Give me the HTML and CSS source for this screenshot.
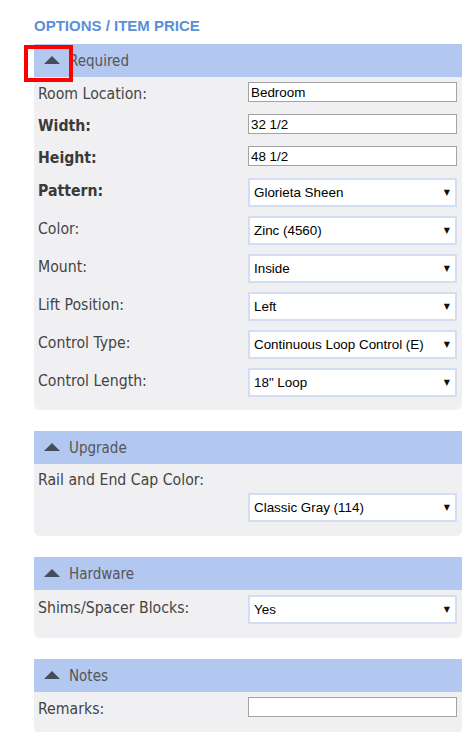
FILE: index.html
```html
<!DOCTYPE html>
<html>
<head>
<meta charset="utf-8">
<link rel="stylesheet" href="styles.css">
</head>
<body>
<div class="page">
  <h1 class="title">OPTIONS / ITEM PRICE</h1>

  <section class="panel">
    <div class="panel-head"><span class="tri"></span><span class="head-text">Required</span><span class="marker"></span></div>
    <div class="panel-body">
      <div class="row row-text"><label class="lbl">Room Location:</label><input class="txt" type="text" value="Bedroom"></div>
      <div class="row row-text"><label class="lbl bold">Width:</label><input class="txt" type="text" value="32 1/2"></div>
      <div class="row row-text"><label class="lbl bold">Height:</label><input class="txt" type="text" value="48 1/2"></div>
      <div class="row row-sel"><label class="lbl bold">Pattern:</label><div class="sel"><span>Glorieta Sheen</span><span class="arr">▼</span></div></div>
      <div class="row row-sel"><label class="lbl">Color:</label><div class="sel"><span>Zinc (4560)</span><span class="arr">▼</span></div></div>
      <div class="row row-sel"><label class="lbl">Mount:</label><div class="sel"><span>Inside</span><span class="arr">▼</span></div></div>
      <div class="row row-sel"><label class="lbl">Lift Position:</label><div class="sel"><span>Left</span><span class="arr">▼</span></div></div>
      <div class="row row-sel"><label class="lbl">Control Type:</label><div class="sel"><span>Continuous Loop Control (E)</span><span class="arr">▼</span></div></div>
      <div class="row row-sel"><label class="lbl">Control Length:</label><div class="sel"><span>18" Loop</span><span class="arr">▼</span></div></div>
    </div>
  </section>

  <section class="panel">
    <div class="panel-head"><span class="tri"></span><span class="head-text">Upgrade</span></div>
    <div class="panel-body body-upgrade">
      <label class="lbl lbl-full">Rail and End Cap Color:</label>
      <div class="row row-sel row-right"><div class="sel"><span>Classic Gray (114)</span><span class="arr">▼</span></div></div>
    </div>
  </section>

  <section class="panel">
    <div class="panel-head"><span class="tri"></span><span class="head-text">Hardware</span></div>
    <div class="panel-body body-hw">
      <div class="row row-sel"><label class="lbl">Shims/Spacer Blocks:</label><div class="sel"><span>Yes</span><span class="arr">▼</span></div></div>
    </div>
  </section>

  <section class="panel">
    <div class="panel-head"><span class="tri"></span><span class="head-text">Notes</span></div>
    <div class="panel-body body-notes">
      <div class="row row-text"><label class="lbl">Remarks:</label><input class="txt" type="text" value=""></div>
    </div>
  </section>
</div>
</body>
</html>
```

FILE: styles.css
```css
html, body {
  margin: 0;
  padding: 0;
  background: #ffffff;
}
.page {
  padding: 17px 4px 0 34px;
}
.title {
  margin: 0 0 10px 0;
  font-family: "Liberation Sans", Arial, sans-serif;
  font-weight: bold;
  font-size: 15px;
  line-height: 17px;
  color: #5b8fd9;
}
.panel {
  margin-bottom: 21px;
}
.panel-head {
  position: relative;
  height: 33px;
  background: #b3c8f1;
  display: flex;
  align-items: center;
  padding-left: 10px;
}
.tri {
  width: 0;
  height: 0;
  border-left: 8px solid transparent;
  border-right: 8px solid transparent;
  border-bottom: 8px solid #454d5b;
  margin-right: 9px;
  margin-top: -1px;
}
.head-text {
  font-family: "DejaVu Sans Condensed", "DejaVu Sans", sans-serif;
  font-size: 15px;
  color: #555555;
}
.marker {
  position: absolute;
  left: -10px;
  top: 1px;
  width: 41px;
  height: 29px;
  border: 4px solid #ff0000;
}
.panel-body {
  background: #f0f0f2;
  border-radius: 0 0 6px 6px;
  padding: 5px 5px 13px 4px;
}
.row {
  display: flex;
  align-items: flex-start;
}
.row-text + .row-text {
  margin-top: 12px;
}
.row-text + .row-sel {
  margin-top: 12px;
}
.row-sel + .row-sel {
  margin-top: 9px;
}
.lbl {
  width: 210px;
  flex: none;
  font-family: "DejaVu Sans Condensed", "DejaVu Sans", sans-serif;
  font-size: 15.7px;
  line-height: 16px;
  color: #444444;
}
.row-text .lbl {
  padding-top: 4px;
}
.row-sel .lbl {
  padding-top: 5px;
}
.bold {
  font-weight: bold;
  color: #3a3a3a;
}
.txt {
  box-sizing: border-box;
  width: 209px;
  height: 20px;
  margin: 0;
  border: 1px solid #a3a3a3;
  background: #ffffff;
  padding: 0 2px;
  font-family: "Liberation Sans", Arial, sans-serif;
  font-size: 13.4px;
  color: #000000;
  outline: none;
}
.sel {
  box-sizing: border-box;
  width: 209px;
  height: 29px;
  border: 2px solid #d3ddf3;
  background: #ffffff;
  display: flex;
  align-items: center;
  justify-content: space-between;
  padding: 0 5px 0 4px;
  font-family: "Liberation Sans", Arial, sans-serif;
  font-size: 13.4px;
  color: #000000;
}
.arr {
  font-family: "DejaVu Sans", sans-serif;
  font-size: 8px;
  color: #111111;
}
.body-upgrade {
  padding-top: 7px;
  padding-bottom: 14px;
}
.lbl-full {
  display: block;
  width: auto;
  line-height: 18px;
}
.row-right {
  justify-content: flex-end;
  margin-top: 4px;
}
.body-hw {
  padding-top: 5px;
  padding-bottom: 14px;
}
.body-notes {
  padding-top: 5px;
  padding-bottom: 16px;
}
```
